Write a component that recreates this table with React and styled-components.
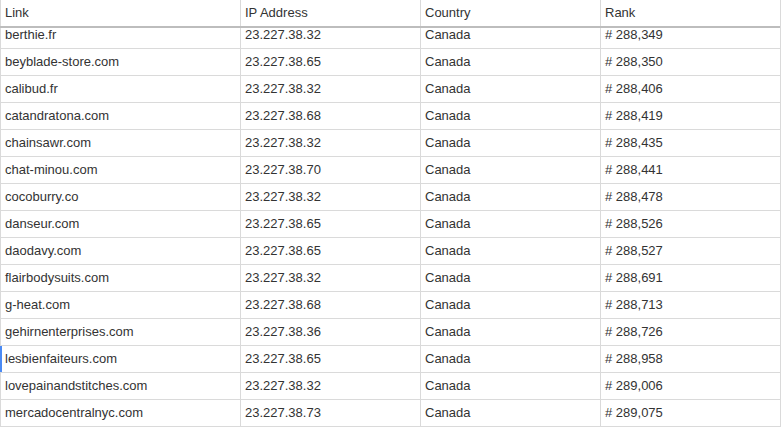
import React, { useEffect, useRef } from 'react'
import styled, { createGlobalStyle } from 'styled-components'

const rows = [
  ['berthie.fr', '23.227.38.32', 'Canada', '# 288,349'],
  ['beyblade-store.com', '23.227.38.65', 'Canada', '# 288,350'],
  ['calibud.fr', '23.227.38.32', 'Canada', '# 288,406'],
  ['catandratona.com', '23.227.38.68', 'Canada', '# 288,419'],
  ['chainsawr.com', '23.227.38.32', 'Canada', '# 288,435'],
  ['chat-minou.com', '23.227.38.70', 'Canada', '# 288,441'],
  ['cocoburry.co', '23.227.38.32', 'Canada', '# 288,478'],
  ['danseur.com', '23.227.38.65', 'Canada', '# 288,526'],
  ['daodavy.com', '23.227.38.65', 'Canada', '# 288,527'],
  ['flairbodysuits.com', '23.227.38.32', 'Canada', '# 288,691'],
  ['g-heat.com', '23.227.38.68', 'Canada', '# 288,713'],
  ['gehirnenterprises.com', '23.227.38.36', 'Canada', '# 288,726'],
  ['lesbienfaiteurs.com', '23.227.38.65', 'Canada', '# 288,958'],
  ['lovepainandstitches.com', '23.227.38.32', 'Canada', '# 289,006'],
  ['mercadocentralnyc.com', '23.227.38.73', 'Canada', '# 289,075'],
]

const GlobalStyle = createGlobalStyle`
  html, body {
    margin: 0;
    padding: 0;
    background: #fff;
  }
  body {
    font-family: "Liberation Sans", Arial, sans-serif;
  }
`

export default function App() {
  const bodyRef = useRef(null)

  useEffect(() => {
    // the list is shown scrolled to its end
    if (bodyRef.current) bodyRef.current.scrollTop = bodyRef.current.scrollHeight
  }, [])

  return (
    <>
      <GlobalStyle />
      <Table>
        <HeadRow>
          <Cell>Link</Cell>
          <Cell>IP Address</Cell>
          <Cell>Country</Cell>
          <Cell>Rank</Cell>
        </HeadRow>
        <Body ref={bodyRef}>
          {rows.map((r) => (
            <Row key={r[0]}>
              <Cell $active={r[0] === 'lesbienfaiteurs.com'}>{r[0]}</Cell>
              <Cell>{r[1]}</Cell>
              <Cell>{r[2]}</Cell>
              <Cell>{r[3]}</Cell>
            </Row>
          ))}
        </Body>
      </Table>
    </>
  )
}

const Table = styled.div`
  width: 781px;
  height: 427px;
  box-sizing: border-box;
  border-right: 1px solid #dadada;
  display: flex;
  flex-direction: column;
  color: #333;
  font-size: 13px;
`

const HeadRow = styled.div`
  display: grid;
  grid-template-columns: 240px 180px 180px 180px;
  height: 28px;
  box-sizing: border-box;
  border-bottom: 2px solid #bdbdbd;
  line-height: 26px;
`

const Body = styled.div`
  flex: 1;
  overflow: hidden;
`

const Row = styled.div`
  display: grid;
  grid-template-columns: 240px 180px 180px 180px;
  height: 27px;
  box-sizing: border-box;
  border-bottom: 1px solid #dadada;
  line-height: 26px;
`

const Cell = styled.div`
  box-sizing: border-box;
  border-left: ${(p) => (p.$active ? '2px solid #4a8af4' : '1px solid #dadada')};
  padding-left: ${(p) => (p.$active ? '3px' : '4px')};
  white-space: nowrap;
  overflow: hidden;
`
